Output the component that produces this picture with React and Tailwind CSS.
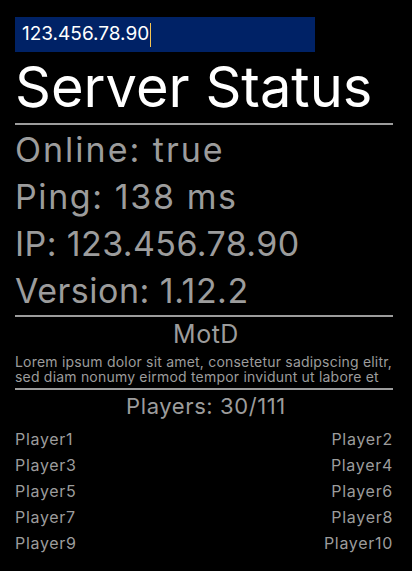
export default function App() {
  const players = ["Player1", "Player2", "Player3", "Player4", "Player5", "Player6", "Player7", "Player8", "Player9", "Player10"];
  return (
    <div className="min-h-screen bg-black px-[15px] pt-[17px] font-['Inter',sans-serif] text-[#9c9c9c]">
      {/* address field */}
      <div className="flex h-[35px] w-[300px] items-center bg-[#002266] pl-[7px] text-[19px] text-white">
        <span>123.456.78.90</span>
        <span className="ml-px h-[24px] w-px bg-[#f5c451]" />
      </div>

      <h1 className="mt-[3px] text-[56px] leading-[64px] text-white">Server Status</h1>
      <div className="mt-[4px] h-[2px] w-[378px] bg-[#9c9c9c]" />

      <div className="mt-px text-[34px] leading-[47px]">
        <div className="tracking-[2px]">Online: true</div>
        <div className="tracking-[1.6px]">Ping: 138 ms</div>
        <div className="tracking-[0.4px]">IP: 123.456.78.90</div>
        <div className="tracking-[0.5px]">Version: 1.12.2</div>
      </div>
      <div className="mt-px h-[2px] w-[378px] bg-[#9c9c9c]" />

      <div className="text-center text-[25px] leading-[34px] tracking-[0.5px]">MotD</div>
      <p className="mt-[3px] text-[14px] leading-[15px] tracking-[0.2px]">
        Lorem ipsum dolor sit amet, consetetur sadipscing elitr, sed diam nonumy eirmod tempor invidunt ut labore et
      </p>
      <div className="mt-[4px] h-[2px] w-[378px] bg-[#9c9c9c]" />

      <div className="text-center text-[22px] leading-[33px] tracking-[0.6px]">Players: 30/111</div>
      <div className="mt-[3px] grid w-[378px] grid-cols-2 text-[16px] leading-[26px] tracking-[0.7px]">
        {players.map((p, i) => (
          <div key={p} className={i % 2 ? "text-right" : "text-left"}>
            {p}
          </div>
        ))}
      </div>
    </div>
  );
}
